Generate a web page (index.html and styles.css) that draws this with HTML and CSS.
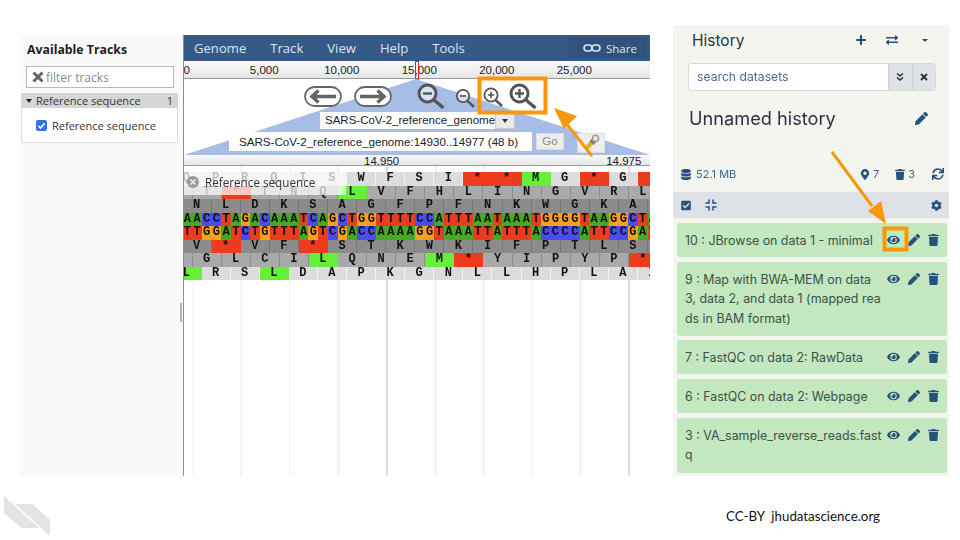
FILE: index.html
```html
<!DOCTYPE html>
<html lang="en">
<head>
  <meta charset="UTF-8">
  <title>JBrowse in Galaxy</title>
  <link rel="stylesheet" href="styles.css">
</head>
<body>
  <svg class="defs" width="0" height="0">
    <symbol id="i-pencil" viewBox="0 0 512 512"><path d="M497.9 142.1l-46.1 46.1c-4.7 4.7-12.3 4.7-17 0l-111-111c-4.7-4.7-4.7-12.3 0-17l46.1-46.1c18.7-18.7 49.1-18.7 67.9 0l60.1 60.1c18.8 18.7 18.8 49.1 0 67.9zM284.2 99.8L21.6 362.4.4 483.9c-2.9 16.4 11.4 30.6 27.8 27.8l121.5-21.3 262.6-262.6c4.7-4.7 4.7-12.3 0-17l-111-111c-4.8-4.7-12.4-4.7-17.1 0z"/></symbol>
    <symbol id="i-trash" viewBox="0 0 448 512"><path d="M432 32H312l-9.4-18.7A24 24 0 0 0 281.1 0H166.8a23.72 23.72 0 0 0-21.4 13.3L136 32H16A16 16 0 0 0 0 48v32a16 16 0 0 0 16 16h416a16 16 0 0 0 16-16V48a16 16 0 0 0-16-16zM53.2 467a48 48 0 0 0 47.9 45h245.8a48 48 0 0 0 47.9-45L416 128H32z"/></symbol>
    <symbol id="i-eye" viewBox="0 0 576 512"><path d="M572.52 241.4C518.29 135.59 410.93 64 288 64S57.68 135.64 3.48 241.41a32.35 32.35 0 0 0 0 29.19C57.71 376.41 165.07 448 288 448s230.32-71.64 284.52-177.41a32.35 32.35 0 0 0 0-29.19zM288 400a144 144 0 1 1 144-144 143.93 143.93 0 0 1-144 144zm0-240a95.31 95.31 0 0 0-25.31 3.79 47.85 47.85 0 0 1-66.9 66.9A95.78 95.78 0 1 0 288 160z"/></symbol>
    <symbol id="i-plus" viewBox="0 0 448 512"><path d="M416 208H272V64c0-17.67-14.33-32-32-32h-32c-17.67 0-32 14.33-32 32v144H32c-17.67 0-32 14.33-32 32v32c0 17.67 14.33 32 32 32h144v144c0 17.67 14.33 32 32 32h32c17.67 0 32-14.33 32-32V304h144c17.67 0 32-14.33 32-32v-32c0-17.67-14.33-32-32-32z"/></symbol>
    <symbol id="i-exchange" viewBox="0 0 512 512"><path d="M0 168v-16c0-13.255 10.745-24 24-24h360V80c0-21.367 25.899-32.042 40.971-16.971l80 80c9.372 9.373 9.372 24.569 0 33.941l-80 80C409.956 271.982 384 261.456 384 240v-48H24c-13.255 0-24-10.745-24-24zm488 152H128v-48c0-21.314-25.862-32.08-40.971-16.971l-80 80c-9.372 9.373-9.372 24.569 0 33.941l80 80C102.057 463.997 128 453.437 128 432v-48h360c13.255 0 24-10.745 24-24v-16c0-13.255-10.745-24-24-24z"/></symbol>
    <symbol id="i-marker" viewBox="0 0 384 512"><path d="M172.268 501.67C26.97 291.031 0 269.413 0 192 0 85.961 85.961 0 192 0s192 85.961 192 192c0 77.413-26.97 99.031-172.268 309.67-9.535 13.774-29.93 13.773-39.464 0zM192 272c44.183 0 80-35.817 80-80s-35.817-80-80-80-80 35.817-80 80 35.817 80 80 80z"/></symbol>
    <symbol id="i-database" viewBox="0 0 448 512"><path d="M448 73.143v45.714C448 159.143 347.667 192 224 192S0 159.143 0 118.857V73.143C0 32.857 100.333 0 224 0s224 32.857 224 73.143zM448 176v102.857C448 319.143 347.667 352 224 352S0 319.143 0 278.857V176c48.125 33.143 136.208 48.572 224 48.572S399.874 209.143 448 176zm0 160v102.857C448 479.143 347.667 512 224 512S0 479.143 0 438.857V336c48.125 33.143 136.208 48.572 224 48.572S399.874 369.143 448 336z"/></symbol>
    <symbol id="i-sync" viewBox="0 0 512 512"><path d="M440.65 12.57l4 82.77A247.16 247.16 0 0 0 255.83 8C134.73 8 33.91 94.92 12.29 209.82A12 12 0 0 0 24.09 224h49.05a12 12 0 0 0 11.67-9.26 175.91 175.91 0 0 1 317-56.94l-101.46-4.86a12 12 0 0 0-12.57 12v47.41a12 12 0 0 0 12 12H500a12 12 0 0 0 12-12V12a12 12 0 0 0-12-12h-47.37a12 12 0 0 0-11.98 12.57zM255.83 432a175.61 175.61 0 0 1-146-77.8l101.8 4.87a12 12 0 0 0 12.57-12v-47.4a12 12 0 0 0-12-12H12a12 12 0 0 0-12 12V500a12 12 0 0 0 12 12h47.35a12 12 0 0 0 12-12.6l-4.15-82.57A247.17 247.17 0 0 0 255.83 504c121.11 0 221.93-86.92 243.55-201.82a12 12 0 0 0-11.8-14.18h-49.05a12 12 0 0 0-11.67 9.26A175.86 175.86 0 0 1 255.83 432z"/></symbol>
    <symbol id="i-check" viewBox="0 0 448 512"><path d="M400 480H48c-26.51 0-48-21.49-48-48V80c0-26.51 21.49-48 48-48h352c26.51 0 48 21.49 48 48v352c0 26.51-21.49 48-48 48zm-204.686-98.059l184-184c6.248-6.248 6.248-16.379 0-22.627l-22.627-22.627c-6.248-6.248-16.379-6.249-22.628 0L184 302.745l-69.059-69.059c-6.248-6.248-16.379-6.248-22.628 0L69.686 256.313c-6.248 6.248-6.248 16.379 0 22.627l104 104c6.249 6.25 16.379 6.25 22.628.001z"/></symbol>
    <symbol id="i-cog" viewBox="0 0 512 512"><path d="M487.4 315.7l-42.6-24.6c4.3-23.2 4.3-47 0-70.2l42.6-24.6c4.9-2.8 7.1-8.6 5.5-14-11.1-35.6-30-67.8-54.7-94.6-3.8-4.1-10-5.1-14.8-2.3L380.8 110c-17.9-15.4-38.5-27.3-60.8-35.1V25.8c0-5.6-3.9-10.5-9.4-11.7-36.7-8.2-74.3-7.8-109.2 0-5.5 1.2-9.4 6.1-9.4 11.7V75c-22.2 7.9-42.8 19.8-60.8 35.1L88.7 85.5c-4.9-2.8-11-1.9-14.8 2.3-24.7 26.7-43.6 58.9-54.7 94.6-1.7 5.4.6 11.2 5.5 14L67.3 221c-4.3 23.2-4.3 47 0 70.2l-42.6 24.6c-4.9 2.8-7.1 8.6-5.5 14 11.1 35.6 30 67.8 54.7 94.6 3.8 4.1 10 5.1 14.8 2.3l42.6-24.6c17.9 15.4 38.5 27.3 60.8 35.1v49.2c0 5.6 3.9 10.5 9.4 11.7 36.7 8.2 74.3 7.8 109.2 0 5.5-1.2 9.4-6.1 9.4-11.7v-49.2c22.2-7.9 42.8-19.8 60.8-35.1l42.6 24.6c4.9 2.8 11 1.9 14.8-2.3 24.7-26.7 43.6-58.9 54.7-94.6 1.5-5.5-.7-11.3-5.6-14.1zM256 336c-44.1 0-80-35.9-80-80s35.9-80 80-80 80 35.9 80 80-35.9 80-80 80z"/></symbol>
  </svg>

  <div class="slide">
    <div class="shots">
      <!-- JBrowse screenshot -->
      <div class="browser">
        <div class="tracks-side">
          <div class="side-title">Available Tracks</div>
          <div class="filter">
            <svg class="filter-x" viewBox="0 0 12 12"><path d="M1.500 1.500l9 9M10.500 1.500l-9 9"/></svg>
            <span>filter tracks</span>
          </div>
          <div class="cat-head">
            <span class="cat-caret"></span>
            <span class="cat-name">Reference sequence</span>
            <span class="cat-count">1</span>
          </div>
          <div class="cat-body">
            <span class="check"><svg viewBox="0 0 11 11"><path d="M2.300 5.800l2.200 2.200 4.200-4.800"/></svg></span>
            <span>Reference sequence</span>
          </div>
        </div>
        <div class="resizer"><span class="resizer-grip"></span></div>
        <div class="genome">
          <div class="menubar">
            <span>Genome</span><span>Track</span><span>View</span><span>Help</span><span>Tools</span>
            <div class="share">
              <svg viewBox="0 0 18 10"><rect x="1" y="2" width="8" height="6" rx="3"/><rect x="9" y="2" width="8" height="6" rx="3"/></svg>
              <span>Share</span>
            </div>
          </div>
          <div class="overview">
            <span>0</span><span>5,000</span><span>10,000</span><span>15,000</span><span>20,000</span><span>25,000</span>
            <i class="locator"></i>
          </div>
          <div class="nav">
            <div class="nav-buttons">
              <svg class="pill pill-l" viewBox="0 0 38 21"><rect x="1" y="1" width="36" height="19" rx="9.500"/><path class="pill-arrow" d="M32 10.500H8M14.500 4.500l-6.500 6 6.500 6"/></svg>
              <svg class="pill pill-r" viewBox="0 0 38 21"><rect x="1" y="1" width="36" height="19" rx="9.500"/><path class="pill-arrow" d="M6 10.500h24M23.500 4.500l6.500 6-6.500 6"/></svg>
              <svg class="mag mag-big mag-first" viewBox="0 0 28 26"><circle cx="10.500" cy="10.500" r="8.500"/><path class="mag-sign" d="M6 10.500h9"/><path class="mag-handle" d="M17 17l9.500 8"/></svg>
              <svg class="mag mag-small mag-second" viewBox="0 0 20 20"><circle cx="8" cy="8" r="6.200"/><path class="mag-sign" d="M5 8h6"/><path class="mag-handle" d="M12.500 13l6.500 6"/></svg>
              <svg class="mag mag-small mag-third" viewBox="0 0 20 20"><circle cx="8" cy="8" r="6.600"/><path class="mag-sign" d="M4.800 8h6.400M8 4.800v6.400"/><path class="mag-handle" d="M12.500 13l6.500 6"/></svg>
              <svg class="mag mag-big mag-fourth" viewBox="0 0 28 26"><circle cx="10.500" cy="10.500" r="8.500"/><path class="mag-sign" d="M6 10.500h9M10.500 6v9"/><path class="mag-handle" d="M17 17l9.500 8"/></svg>
            </div>
            <div class="ref-select">
              <span class="ref-name">SARS-CoV-2_reference_genome</span>
              <span class="ref-drop"><i></i></span>
            </div>
            <div class="loc-row">
              <div class="loc-input">SARS-CoV-2_reference_genome:14930..14977 (48 b)</div>
              <div class="go">Go</div>
              <div class="flash">
                <svg viewBox="0 0 20 20"><path class="flash-body" d="M4 17l8-9"/><path class="flash-neck" d="M10.500 10l3.500-3.500"/><circle class="flash-head" cx="15" cy="5" r="3.500"/></svg>
              </div>
            </div>
          </div>
          <div class="ruler">
            <span class="tick-a">14,950</span><span class="tick-b">14,975</span>
          </div>
          <div class="track">
            <div class="row aa light off-a"><b>Q</b><b>P</b><b>R</b><b>Q</b><b>I</b><b>S</b><b>W</b><b>F</b><b>S</b><b>I</b><b class="stop">*</b><b class="stop">*</b><b class="met">M</b><b>G</b><b class="stop">*</b><b>G</b><b class="stop">*</b></div>
            <div class="row aa mid off-b"><b></b><b>T</b><b class="stop">*</b><b>T</b><b>N</b><b>Q</b><b class="met">L</b><b>V</b><b>F</b><b>H</b><b>L</b><b>I</b><b>N</b><b>G</b><b>V</b><b>R</b><b>L</b></div>
            <div class="row aa dark off-c"><b>N</b><b>L</b><b>D</b><b>K</b><b>S</b><b>A</b><b>G</b><b>F</b><b>P</b><b>F</b><b>N</b><b>K</b><b>W</b><b>G</b><b>K</b><b>A</b><b></b></div>
            <div class="row dna off-c"><i class="a">A</i><i class="a">A</i><i class="c">C</i><i class="c">C</i><i class="t">T</i><i class="a">A</i><i class="g">G</i><i class="a">A</i><i class="c">C</i><i class="a">A</i><i class="a">A</i><i class="a">A</i><i class="t">T</i><i class="c">C</i><i class="a">A</i><i class="g">G</i><i class="c">C</i><i class="t">T</i><i class="g">G</i><i class="g">G</i><i class="t">T</i><i class="t">T</i><i class="t">T</i><i class="t">T</i><i class="c">C</i><i class="c">C</i><i class="a">A</i><i class="t">T</i><i class="t">T</i><i class="t">T</i><i class="a">A</i><i class="a">A</i><i class="t">T</i><i class="a">A</i><i class="a">A</i><i class="a">A</i><i class="t">T</i><i class="g">G</i><i class="g">G</i><i class="g">G</i><i class="g">G</i><i class="t">T</i><i class="a">A</i><i class="a">A</i><i class="g">G</i><i class="g">G</i><i class="c">C</i><i class="t">T</i><i class="a">A</i></div>
            <div class="row dna off-c"><i class="t">T</i><i class="t">T</i><i class="g">G</i><i class="g">G</i><i class="a">A</i><i class="t">T</i><i class="c">C</i><i class="t">T</i><i class="g">G</i><i class="t">T</i><i class="t">T</i><i class="t">T</i><i class="a">A</i><i class="g">G</i><i class="t">T</i><i class="c">C</i><i class="g">G</i><i class="a">A</i><i class="c">C</i><i class="c">C</i><i class="a">A</i><i class="a">A</i><i class="a">A</i><i class="a">A</i><i class="g">G</i><i class="g">G</i><i class="t">T</i><i class="a">A</i><i class="a">A</i><i class="a">A</i><i class="t">T</i><i class="t">T</i><i class="a">A</i><i class="t">T</i><i class="t">T</i><i class="t">T</i><i class="a">A</i><i class="c">C</i><i class="c">C</i><i class="c">C</i><i class="c">C</i><i class="a">A</i><i class="t">T</i><i class="t">T</i><i class="c">C</i><i class="c">C</i><i class="g">G</i><i class="a">A</i><i class="t">T</i></div>
            <div class="row aa dark off-c"><b>V</b><b class="stop">*</b><b>V</b><b>F</b><b class="stop">*</b><b>S</b><b>T</b><b>K</b><b>W</b><b>K</b><b>I</b><b>F</b><b>P</b><b>T</b><b>L</b><b>S</b><b></b></div>
            <div class="row aa mid off-b"><b></b><b>G</b><b>L</b><b>C</b><b>I</b><b class="met">L</b><b>Q</b><b>N</b><b>E</b><b class="met">M</b><b class="stop">*</b><b>Y</b><b>I</b><b>P</b><b>Y</b><b>P</b><b class="stop">*</b></div>
            <div class="row aa light off-a"><b class="met">L</b><b>R</b><b>S</b><b class="met">L</b><b>D</b><b>A</b><b>P</b><b>K</b><b>G</b><b>N</b><b>L</b><b>L</b><b>H</b><b>P</b><b>L</b><b>A</b><b>I</b></div>
            <div class="track-label">
              <svg viewBox="0 0 12 12"><circle cx="6" cy="6" r="6"/><path d="M3.500 3.500l5 5M8.500 3.500l-5 5"/></svg>
              <span>Reference sequence</span>
            </div>
          </div>
        </div>
      </div>

      <!-- Galaxy history panel -->
      <div class="history">
        <div class="hist-head">
          <span class="hist-title">History</span>
          <svg class="ic hist-plus"><use href="#i-plus"/></svg>
          <svg class="ic hist-swap"><use href="#i-exchange"/></svg>
          <span class="hist-caret"></span>
        </div>
        <div class="search">
          <span class="search-text">search datasets</span>
          <span class="search-btn"><svg class="dbl" viewBox="0 0 10 10"><path d="M2 1.500l3 2.500 3-2.500M2 5.500l3 2.500 3-2.500"/></svg></span>
          <span class="search-btn"><svg class="cross" viewBox="0 0 10 10"><path d="M2 2l6 6M8 2l-6 6"/></svg></span>
        </div>
        <div class="hist-name">
          <span>Unnamed history</span>
          <svg class="ic ic-edit"><use href="#i-pencil"/></svg>
        </div>
        <div class="stats">
          <svg class="ic ic-stat"><use href="#i-database"/></svg>
          <span class="stat-size">52.1 MB</span>
          <svg class="ic ic-stat stat-pin"><use href="#i-marker"/></svg>
          <span>7</span>
          <svg class="ic ic-stat stat-bin"><use href="#i-trash"/></svg>
          <span>3</span>
          <svg class="ic ic-stat stat-sync"><use href="#i-sync"/></svg>
        </div>
        <div class="hist-tools">
          <svg class="ic ic-tool"><use href="#i-check"/></svg>
          <svg class="compress" viewBox="0 0 12 12"><path d="M4 .5V4H.5M8 .5V4h3.500M4 11.500V8H.5M8 11.500V8h3.500"/></svg>
          <svg class="ic ic-tool tool-cog"><use href="#i-cog"/></svg>
        </div>
        <div class="items">
          <div class="item">
            <div class="item-text">10 : JBrowse on data 1 - minimal</div>
            <div class="item-icons"><svg class="ic ic-eye"><use href="#i-eye"/></svg><svg class="ic ic-pen"><use href="#i-pencil"/></svg><svg class="ic ic-bin"><use href="#i-trash"/></svg></div>
          </div>
          <div class="item item-tall">
            <div class="item-text">9 : Map with BWA-MEM on data<br>3, data 2, and data 1 (mapped rea<br>ds in BAM format)</div>
            <div class="item-icons"><svg class="ic ic-eye"><use href="#i-eye"/></svg><svg class="ic ic-pen"><use href="#i-pencil"/></svg><svg class="ic ic-bin"><use href="#i-trash"/></svg></div>
          </div>
          <div class="item">
            <div class="item-text">7 : FastQC on data 2: RawData</div>
            <div class="item-icons"><svg class="ic ic-eye"><use href="#i-eye"/></svg><svg class="ic ic-pen"><use href="#i-pencil"/></svg><svg class="ic ic-bin"><use href="#i-trash"/></svg></div>
          </div>
          <div class="item">
            <div class="item-text">6 : FastQC on data 2: Webpage</div>
            <div class="item-icons"><svg class="ic ic-eye"><use href="#i-eye"/></svg><svg class="ic ic-pen"><use href="#i-pencil"/></svg><svg class="ic ic-bin"><use href="#i-trash"/></svg></div>
          </div>
          <div class="item item-last">
            <div class="item-text">3 : VA_sample_reverse_reads.fast<br>q</div>
            <div class="item-icons"><svg class="ic ic-eye"><use href="#i-eye"/></svg><svg class="ic ic-pen"><use href="#i-pencil"/></svg><svg class="ic ic-bin"><use href="#i-trash"/></svg></div>
          </div>
        </div>
      </div>
    </div>

    <div class="slide-foot">
      <svg class="logo" viewBox="0 0 46 41"><path d="M0 0v17.500L17.500 32h17.500zM11 8h17l18 15.500V40z"/></svg>
      <div class="credit">CC-BY&nbsp; jhudatascience.org</div>
    </div>

    <!-- orange callouts drawn over the screenshots -->
    <svg class="marks" viewBox="0 0 960 540">
      <rect x="479.500" y="78.500" width="66" height="34"/>
      <rect x="884.500" y="228.500" width="22" height="21"/>
      <path d="M592 156l-27-34"/>
      <path class="head" d="M554 108l23 8-13 13z"/>
      <path d="M832 152l40 54"/>
      <path class="head" d="M886 224l-18-13 13-10z"/>
    </svg>
  </div>
</body>
</html>
```

FILE: styles.css
```css
html, body {
  margin: 0;
  padding: 0;
  background: #fff;
}
.defs { position: absolute; }
.slide {
  position: relative;
  width: 960px;
  height: 540px;
  overflow: hidden;
  font-family: "Liberation Sans", Arial, sans-serif;
}
/* the pasted screenshots are soft in the slide */
.shots {
  display: flex;
  align-items: flex-start;
  height: 476px;
  padding-left: 21px;
  filter: blur(0.4px);
}

/* JBrowse */
.browser {
  display: flex;
  width: 629px;
  height: 441px;
  margin-top: 35px;
  background: #f9f9f9;
}
.tracks-side {
  width: 159px;
  flex: none;
  font-family: "Open Sans", sans-serif;
  color: #333;
}
.side-title {
  font-size: 12.3px;
  font-weight: 700;
  color: #222;
  padding: 6px 0 0 6px;
  height: 25px;
  box-sizing: border-box;
  line-height: 18px;
}
.filter {
  display: flex;
  align-items: center;
  gap: 2px;
  box-sizing: border-box;
  width: 148px;
  height: 22px;
  margin: 6px 0 5px 5px;
  padding-left: 5px;
  background: #fff;
  border: 1px solid #bbb;
  font-size: 12px;
  color: #8a8a8a;
}
.filter-x { width: 12px; height: 12px; }
.filter-x path { fill: none; stroke: #666; stroke-width: 3; }
.cat-head {
  display: flex;
  align-items: center;
  width: 157px;
  height: 15px;
  background: #d6d6d6;
  font-size: 11.1px;
}
.cat-caret {
  width: 0;
  height: 0;
  margin: 0 4px 0 5px;
  border-left: 3.5px solid transparent;
  border-right: 3.5px solid transparent;
  border-top: 4px solid #222;
}
.cat-count { margin-left: auto; padding-right: 5px; }
.cat-body {
  display: flex;
  align-items: center;
  gap: 5px;
  box-sizing: border-box;
  width: 157px;
  height: 35px;
  padding-left: 14px;
  background: #fff;
  border: 1px solid #ddd;
  border-top: 0;
  font-size: 11px;
}
.check {
  display: block;
  width: 11px;
  height: 11px;
  border-radius: 2px;
  background: #2f72ee;
}
.check svg { display: block; width: 11px; height: 11px; }
.check path { fill: none; stroke: #fff; stroke-width: 1.6; }
.resizer {
  width: 4px;
  flex: none;
  position: relative;
  background: linear-gradient(90deg, #f9f9f9 0 3px, #8e8e8e 3px);
}
.resizer-grip {
  position: absolute;
  left: 0;
  top: 268px;
  width: 2px;
  height: 19px;
  background: #b4b4b4;
}
.genome {
  width: 466px;
  flex: none;
  background: #fff;
  overflow: hidden;
}
.menubar {
  display: flex;
  align-items: center;
  gap: 24px;
  height: 26px;
  padding-left: 10px;
  background: #365a88;
  color: #dde6f1;
  font-family: "Open Sans", sans-serif;
  font-size: 13.1px;
}
.share {
  display: flex;
  align-items: center;
  gap: 5px;
  box-sizing: border-box;
  width: 79px;
  height: 20px;
  margin-left: auto;
  margin-right: 3px;
  padding-left: 14px;
  background: #31527d;
  border: 1px solid #2f4e78;
  font-size: 11.5px;
}
.share svg { width: 18px; height: 10px; }
.share rect { fill: none; stroke: #dde6f1; stroke-width: 1.5; }
.overview {
  position: relative;
  display: flex;
  height: 18px;
  margin-left: -36px;
  background: linear-gradient(#fafafa, #e6e6e6);
  border-bottom: 1px solid #999;
  box-sizing: border-box;
  font-size: 11.5px;
  line-height: 18px;
  color: #222;
}
.overview span { width: 77.5px; flex: none; text-align: center; }
.locator {
  position: absolute;
  left: 267px;
  top: 0;
  width: 2px;
  height: 17px;
  border: 1px solid #e2231a;
}
.nav {
  position: relative;
  height: 76px;
  box-sizing: border-box;
  padding-top: 4px;
}
.nav::before {
  content: "";
  position: absolute;
  inset: 0;
  background: #a6bde6;
  clip-path: polygon(232px 0, 466px 76px, 0 76px);
}
.nav > * { position: relative; }
.nav-buttons {
  display: flex;
  align-items: flex-start;
  height: 29px;
  padding-left: 120px;
}
.pill { width: 38px; height: 21px; margin-top: 3px; }
.pill-r { margin-left: 12px; }
.pill rect { fill: #fff; stroke: #666; stroke-width: 1.8; }
.pill-arrow { fill: none; stroke: #666; stroke-width: 3.6; }
.mag { flex: none; overflow: visible; }
.mag circle { fill: rgba(255,255,255,.55); stroke: #555; }
.mag path { fill: none; stroke: #555; }
.mag-big { width: 28px; height: 26px; }
.mag-big circle { stroke-width: 3; }
.mag-big .mag-sign { stroke-width: 2.4; }
.mag-big .mag-handle { stroke-width: 3.4; }
.mag-small { width: 20px; height: 20px; margin-top: 5px; }
.mag-small circle { stroke-width: 1.800; }
.mag-small .mag-sign { stroke-width: 1.600; }
.mag-small .mag-handle { stroke-width: 2.400; }
.mag-first { margin-left: 25px; }
.mag-second { margin-left: 10px; }
.mag-third { margin-left: 8px; margin-top: 4px; }
.mag-fourth { margin-left: 6px; }
.ref-select {
  display: flex;
  width: 195px;
  height: 17px;
  margin-left: 136px;
  background: #fff;
  font-size: 11.5px;
  line-height: 17px;
  color: #222;
}
.ref-name { width: 175px; padding-left: 5px; white-space: nowrap; overflow: hidden; box-sizing: border-box; }
.ref-drop {
  display: flex;
  align-items: center;
  justify-content: center;
  width: 20px;
  background: #e9e9e9;
  border: 1px solid #ccc;
  box-sizing: border-box;
}
.ref-drop i {
  border-left: 3.5px solid transparent;
  border-right: 3.5px solid transparent;
  border-top: 4.5px solid #333;
}
.loc-row {
  display: flex;
  align-items: flex-start;
  margin: 3px 0 0 45px;
}
.loc-input {
  box-sizing: border-box;
  width: 303px;
  height: 19px;
  padding-left: 10px;
  background: #fff;
  font-size: 11.6px;
  line-height: 19px;
  color: #222;
  white-space: nowrap;
}
.go {
  width: 28px;
  height: 17px;
  margin: 1px 0 0 4px;
  background: #ededed;
  border: 1px solid #ddd;
  box-sizing: border-box;
  font-size: 11.5px;
  line-height: 15px;
  text-align: center;
  color: #888;
}
.flash {
  display: flex;
  align-items: center;
  justify-content: center;
  width: 28px;
  height: 20px;
  margin: 1px 0 0 13px;
  background: #eee;
  border: 1px solid #ddd;
  box-sizing: border-box;
}
.flash svg { width: 18px; height: 18px; }
.flash-body { fill: none; stroke: #dcae3a; stroke-width: 5; }
.flash-neck { fill: none; stroke: #8d7a4e; stroke-width: 6; }
.flash-head { fill: #e9e6df; stroke: #9a9486; stroke-width: 1.500; }
.ruler {
  display: flex;
  height: 10px;
  box-sizing: content-box;
  background: linear-gradient(#fafafa, #e6e6e6);
  border-bottom: 1px solid #999;
  font-size: 11.5px;
  line-height: 12px;
  color: #222;
  overflow: hidden;
  position: relative;
}
.tick-a { margin-left: 180px; }
.tick-b { margin-left: 207px; }

/* sequence track */
.track {
  position: relative;
  height: 310px;
  padding-top: 6px;
  box-sizing: border-box;
  background:
    repeating-linear-gradient(90deg, #bdbdbd 0 1.5px, transparent 1.5px 242px) 202.5px 0,
    repeating-linear-gradient(90deg, #f0f0f0 0 1.5px, transparent 1.5px 48.4px) 8.5px 0,
    #fff;
  overflow: hidden;
}
.row {
  display: flex;
  height: 13.5px;
  line-height: 13.5px;
  font-family: "Liberation Mono", monospace;
  color: #111;
}
.row > * {
  flex: none;
  box-sizing: border-box;
  text-align: center;
  font-style: normal;
  font-weight: 700;
}
.aa { font-size: 12px; }
.aa b { width: 29.1px; border-right: 1px solid; }
.off-a { margin-left: -11.6px; }
.off-b { margin-left: -20.6px; }
.off-c { margin-left: -1.5px; }
.light b { background: #dcdcdc; border-right-color: #f2f2f2; }
.mid b { background: #a9a9a9; border-right-color: #8e8e8e; }
.dark b { background: #8b8b8b; border-right-color: #777; }
.aa b.stop { background: #ee3b1e; border-right-color: #ee3b1e; }
.aa b.met { background: #65ef3a; border-right-color: #65ef3a; }
.dna { font-size: 12px; }
.dna i { width: 9.7px; }
.dna .a { background: #47a822; }
.dna .t { background: #ea3c1e; }
.dna .c { background: #4a4cf2; }
.dna .g { background: #f6a021; }
.track-label {
  position: absolute;
  left: 0;
  top: 6px;
  display: flex;
  align-items: center;
  width: 162px;
  height: 23px;
  padding: 0 0 4px 3px;
  box-sizing: border-box;
  background: rgba(255,255,255,.72);
  font-family: "Open Sans", sans-serif;
  font-size: 11.7px;
  color: #333;
}
.track-label svg { width: 12px; height: 12px; margin-right: 6px; flex: none; }
.track-label circle { fill: #9a9a9a; }
.track-label path { fill: none; stroke: #eee; stroke-width: 1.5; }

/* Galaxy history */
.history {
  width: 276px;
  height: 451px;
  margin: 25px 0 0 23px;
  background: #f5f5f0;
  font-family: Inter, sans-serif;
  color: #2c3143;
}
.ic { display: block; fill: #25537b; flex: none; }
.hist-head {
  display: flex;
  align-items: center;
  height: 30px;
  padding-left: 19px;
}
.hist-title { font-size: 15.5px; }
.hist-plus { width: 10px; height: 12px; margin-left: auto; }
.hist-swap { width: 12px; height: 12px; margin-left: 20px; }
.hist-caret {
  width: 0;
  height: 0;
  margin: 0 21px 0 24px;
  border-left: 3px solid transparent;
  border-right: 3px solid transparent;
  border-top: 3px solid #25537b;
}
.search {
  display: flex;
  box-sizing: border-box;
  width: 248px;
  height: 28px;
  margin: 8px 0 0 15px;
  background: #fff;
  border: 1px solid #d9dccf;
  border-radius: 3px;
}
.search-text {
  flex: 1;
  padding-left: 8px;
  font-size: 12.2px;
  line-height: 26px;
  color: #4d6a8c;
}
.search-btn {
  display: flex;
  align-items: center;
  justify-content: center;
  width: 23.5px;
  background: #dee2e6;
  border-left: 1px solid #cfd3d6;
  box-sizing: border-box;
}
.dbl, .cross { width: 10px; height: 10px; }
.dbl path { fill: none; stroke: #2c3143; stroke-width: 1.600; }
.cross path { fill: none; stroke: #2c3143; stroke-width: 2; }
.hist-name {
  display: flex;
  align-items: center;
  height: 28px;
  margin-top: 13px;
  padding: 0 21px 0 16px;
  font-size: 18.2px;
  justify-content: space-between;
}
.ic-edit { width: 13px; height: 13px; }
.stats {
  display: flex;
  align-items: center;
  height: 16px;
  margin-top: 34px;
  padding: 0 5px 0 8px;
  font-size: 11px;
  color: #3f6489;
}
.ic-stat { width: 10px; height: 11px; }
.stat-size { margin-left: 5px; margin-right: auto; }
.stat-pin { margin-right: 3px; }
.stat-bin { margin: 0 3px 0 16px; }
.stat-sync { width: 12px; height: 12px; margin-left: 17px; }
.hist-tools {
  display: flex;
  align-items: center;
  gap: 14px;
  height: 26px;
  margin-top: 10px;
  padding: 0 7px 0 8px;
  background: #dee2e6;
}
.ic-tool { width: 10px; height: 11px; }
.compress { width: 12px; height: 12px; }
.compress path { fill: none; stroke: #25537b; stroke-width: 1.500; }
.tool-cog { margin-left: auto; width: 11px; height: 11px; }
.items {
  display: flex;
  flex-direction: column;
  gap: 4.7px;
  margin: 5px 2px 0 4px;
}
.item {
  display: flex;
  justify-content: space-between;
  height: 34px;
  padding: 8px 8px 0 8px;
  box-sizing: border-box;
  background: #c3e7bf;
  border-radius: 3px;
  font-size: 12.4px;
  line-height: 19.500px;
  color: #3b5148;
}
.item-tall { height: 74px; }
.item-last { height: 55px; }
.item-text { white-space: nowrap; }
.item-icons {
  display: flex;
  align-items: center;
  gap: 8px;
  height: 16px;
  margin-top: 1px;
}
.ic-eye { width: 13px; height: 12px; }
.ic-pen { width: 12px; height: 12px; }
.ic-bin { width: 11px; height: 12px; }

/* slide footer */
.slide-foot {
  display: flex;
  justify-content: space-between;
  padding: 20px 80px 0 4px;
}
.logo { width: 46px; height: 41px; }
.logo path { fill: #e4e4e4; }
.credit {
  margin-top: 10px;
  font-family: Lato, sans-serif;
  font-size: 13.3px;
  line-height: 20px;
  color: #111;
}
.marks {
  position: absolute;
  left: 0;
  top: 0;
  width: 960px;
  height: 540px;
  pointer-events: none;
}
.marks rect, .marks path {
  fill: none;
  stroke: #f7970b;
  stroke-width: 3;
}
.marks rect { stroke-width: 4; }
.marks path.head { fill: #f7970b; stroke: none; }
```
